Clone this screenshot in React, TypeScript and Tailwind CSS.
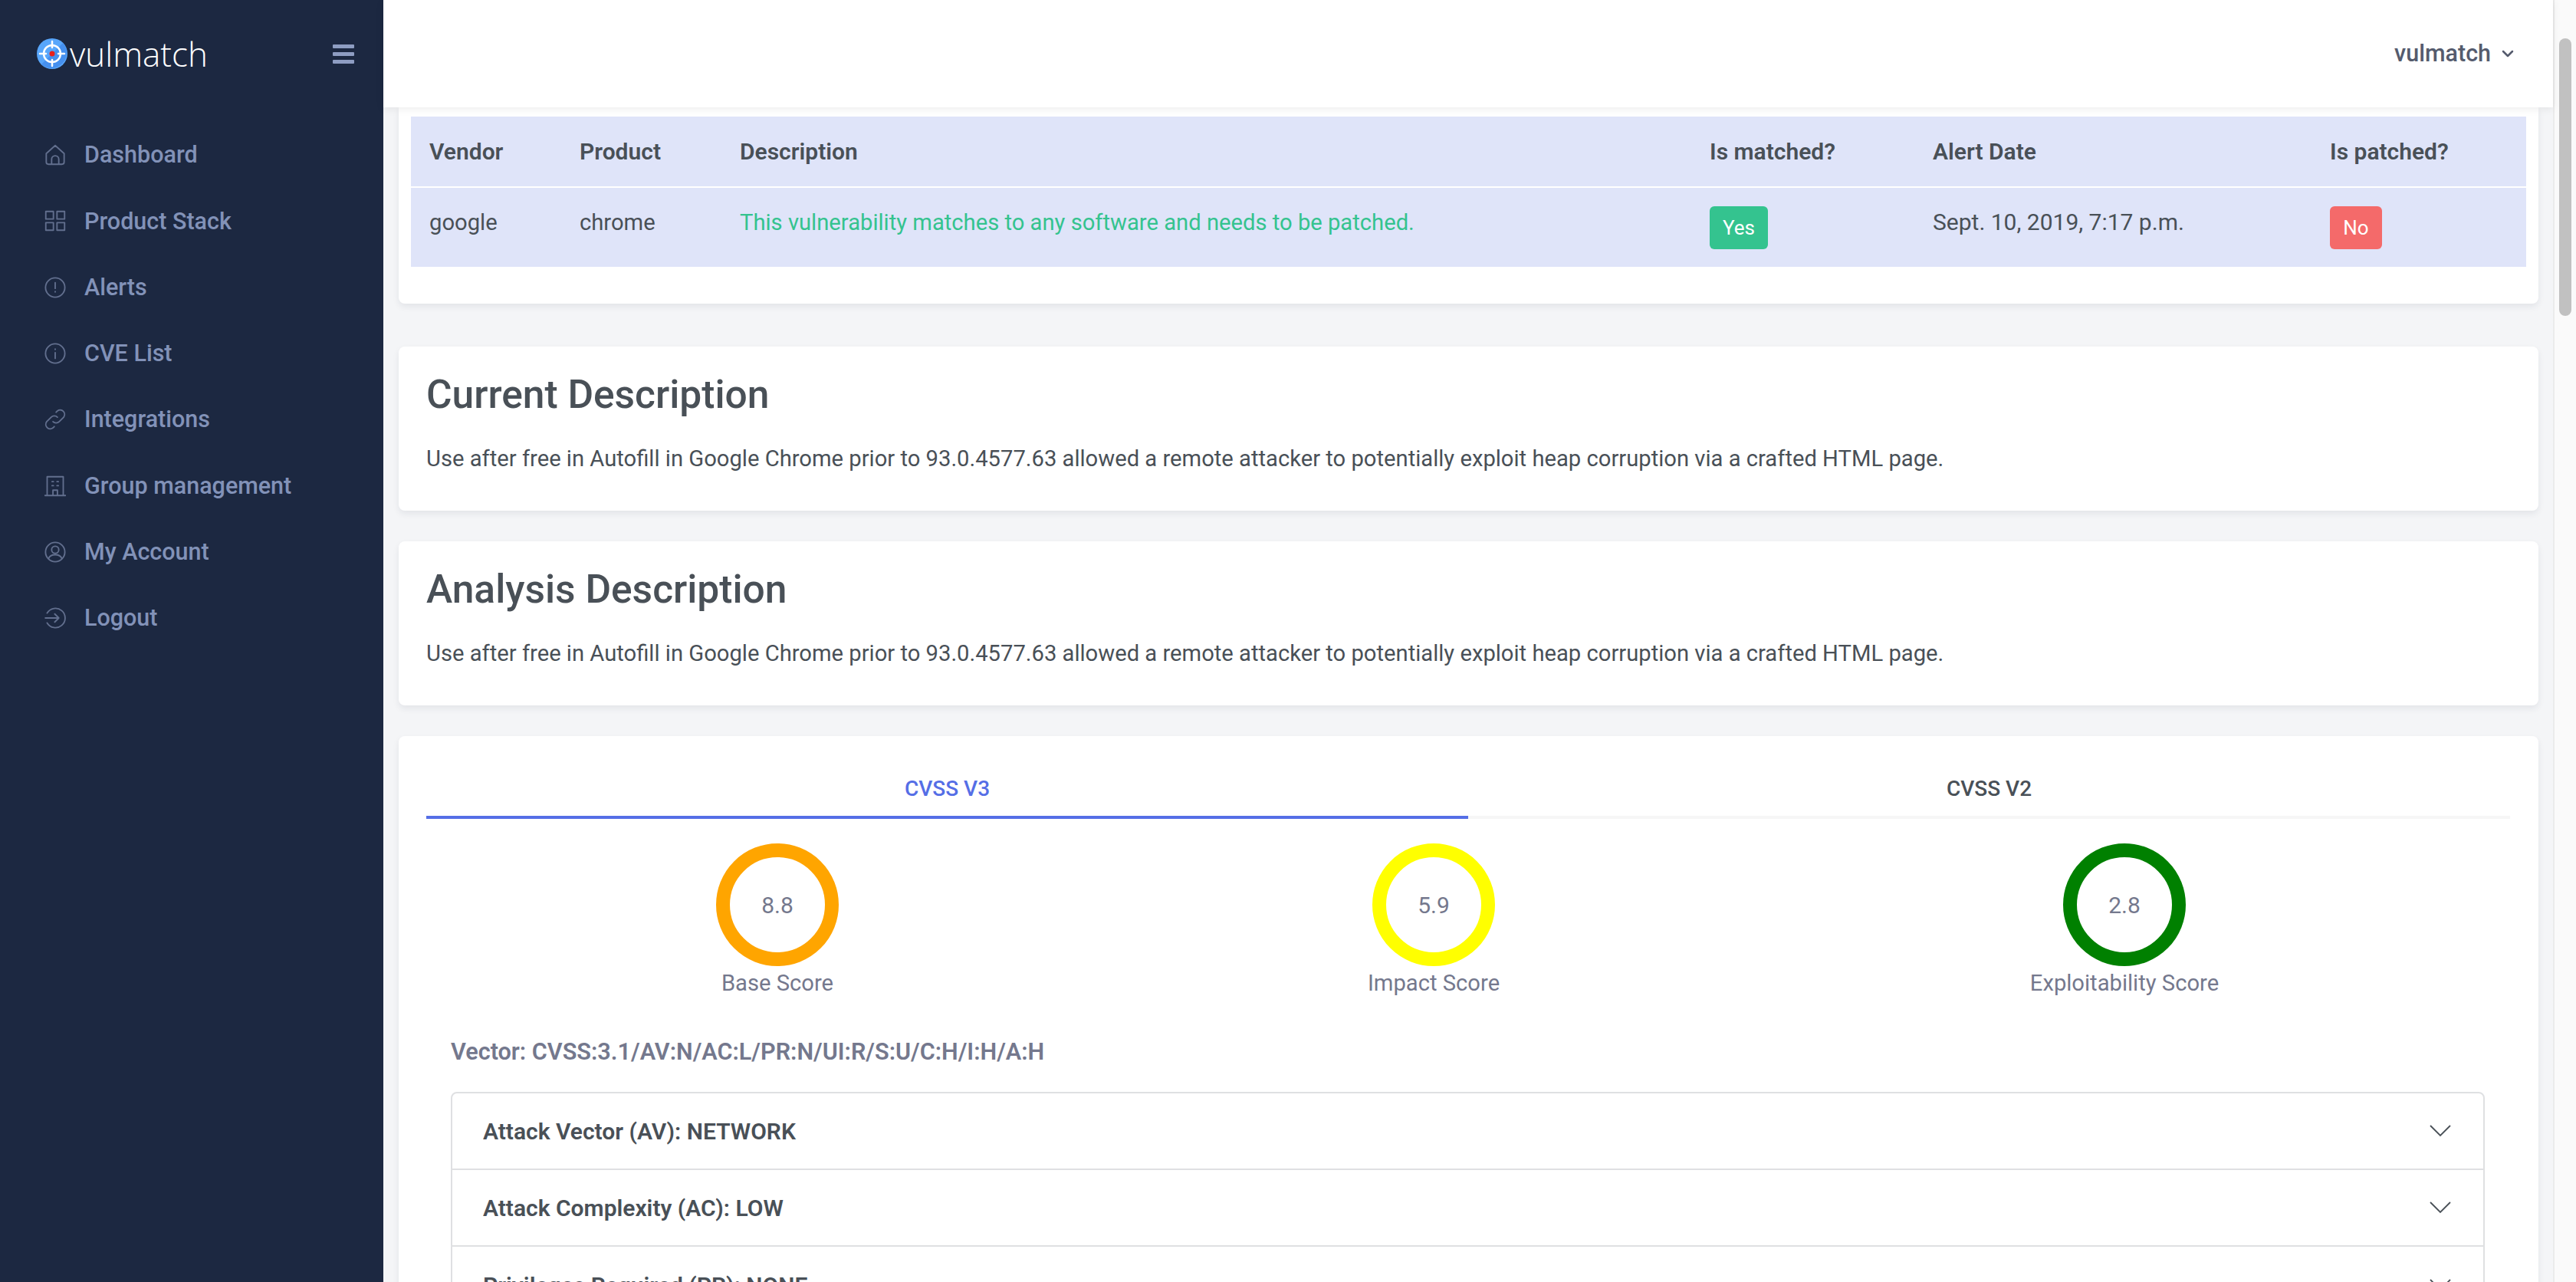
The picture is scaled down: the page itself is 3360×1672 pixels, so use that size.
import { ChevronDown } from 'lucide-react';

const navItems = [
  { label: 'Dashboard', d: 'M2 10.500 12 1.500l10 9V20a2.500 2.500 0 0 1-2.500 2.500h-15A2.500 2.500 0 0 1 2 20zM8 22.500V17a4 4 0 0 1 8 0v5.500' },
  { label: 'Product Stack', d: 'M1.500 1.500h8.500V10H1.500zM14 1.500h8.500V10H14zM1.500 14h8.500v8.500H1.500zM14 14h8.500v8.500H14z' },
  { label: 'Alerts', d: 'M12 1.200a10.800 10.800 0 1 0 0 21.600 10.800 10.800 0 0 0 0-21.600zM12 6.500v6.500M12 16.500v.5' },
  { label: 'CVE List', d: 'M12 1.200a10.800 10.800 0 1 0 0 21.600 10.800 10.800 0 0 0 0-21.600zM12 11v6.500M12 7v.5' },
  { label: 'Integrations', d: 'M9.500 14.500a5 5 0 0 0 7 0l5-5a5 5 0 0 0-7-7l-1.500 1.500M14.500 9.500a5 5 0 0 0-7 0l-5 5a5 5 0 0 0 7 7l1.500-1.500' },
  { label: 'Group management', d: 'M3 22.500V1.500h18v21M.500 22.500h23M9.500 22.500v-6h5v6M8.500 7h1.500M14 7h1.500M8.500 11.500h1.500M14 11.500h1.500' },
  { label: 'My Account', d: 'M12 1.200a10.800 10.800 0 1 0 0 21.600 10.800 10.800 0 0 0 0-21.600zM12 5.500a4 4 0 1 0 0 8 4 4 0 0 0 0-8zM4.500 19.500c1-3 4-4.500 7.500-4.500s6.500 1.500 7.500 4.500' },
  { label: 'Logout', d: 'M3 6.500a10.800 10.800 0 1 1 0 11M1 12h15M11.500 7.500 16 12l-4.500 4.500' },
];

const scores = [
  { value: '8.8', label: 'Base Score', ring: 'border-[#ffa500]', width: 'w-[916px]' },
  { value: '5.9', label: 'Impact Score', ring: 'border-[#ffff00]', width: 'w-[796px]' },
  { value: '2.8', label: 'Exploitability Score', ring: 'border-[#008000]', width: 'flex-1' },
];

const metrics = ['Attack Vector (AV): NETWORK', 'Attack Complexity (AC): LOW', 'Privileges Required (PR): NONE'];

const descriptionText =
  'Use after free in Autofill in Google Chrome prior to 93.0.4577.63 allowed a remote attacker to potentially exploit heap corruption via a crafted HTML page.';

function Logo() {
  return (
    <svg viewBox="0 0 40 40" className="w-10 h-10 shrink-0">
      <circle cx="20" cy="20" r="20" fill="#58a6fb" />
      <path d="M34.100 5.900A20 20 0 0 1 5.900 34.100z" fill="#4690ef" />
      <circle cx="20" cy="20" r="11" fill="none" stroke="#fff" strokeWidth="2.500" />
      <path d="M20 4v8M20 28v8M4 20h8M28 20h8" stroke="#fff" strokeWidth="2.500" strokeLinecap="round" />
      <circle cx="20" cy="20" r="3.500" fill="#e8201c" />
    </svg>
  );
}

function Sidebar() {
  return (
    <aside className="w-[500px] shrink-0 bg-[#1c2841]">
      <div className="h-[140px] pl-12 pr-[38px] flex items-center justify-between">
        <div className="flex items-center">
          <Logo />
          <span className="ml-[3px] text-[44px] leading-none text-white font-['Open_Sans'] font-light">vulmatch</span>
        </div>
        <svg viewBox="0 0 28 25" className="w-7 h-[25px] fill-[#8e9dc2]">
          <rect width="28" height="5" rx="1" />
          <rect y="10" width="28" height="5" rx="1" />
          <rect y="20" width="28" height="5" rx="1" />
        </svg>
      </div>
      <nav className="pt-[19px] pl-[58px] flex flex-col">
        {navItems.map((item) => (
          <div key={item.label} className="h-[86.300px] flex items-center">
            <svg
              viewBox="0 0 24 24"
              fill="none"
              stroke="#626f8e"
              strokeWidth="1.600"
              strokeLinecap="round"
              strokeLinejoin="round"
              className="w-7 h-7 shrink-0"
            >
              <path d={item.d} />
            </svg>
            <span className="ml-6 text-[30.500px] font-medium text-[#8292b8]">{item.label}</span>
          </div>
        ))}
      </nav>
    </aside>
  );
}

function Header() {
  return (
    <header className="relative z-10 h-[140px] shrink-0 bg-white shadow-[0_2px_10px_rgba(0,0,0,0.08)] flex items-center justify-end pr-[47px]">
      <span className="text-[30.500px] font-medium text-[#555b6d]">vulmatch</span>
      <ChevronDown className="ml-[10px] w-6 h-6 text-[#555b6d]" strokeWidth={2.5} />
    </header>
  );
}

function AlertCard() {
  return (
    <section className="shrink-0 bg-white rounded-b-lg shadow-[0_4px_8px_rgba(30,40,60,0.08)] px-4 pt-3 pb-12 mb-[16px]">
      <table className="w-full table-fixed text-[29.200px] text-[#495057] bg-[#dfe4f9]">
        <thead>
          <tr className="h-[92px] border-b-2 border-white text-left text-[30px]">
            <th className="pl-6 w-[196px] font-semibold">Vendor</th>
            <th className="pl-6 w-[209px] font-semibold">Product</th>
            <th className="pl-6 w-[1265px] font-semibold">Description</th>
            <th className="pl-6 w-[291px] font-semibold">Is matched?</th>
            <th className="pl-6 w-[518px] font-semibold">Alert Date</th>
            <th className="pl-6 font-semibold">Is patched?</th>
          </tr>
        </thead>
        <tbody>
          <tr className="h-[104px] align-top leading-[44px]">
            <td className="pl-6 pt-[23px]">google</td>
            <td className="pl-6 pt-[23px]">chrome</td>
            <td className="pl-6 pt-[23px] text-[#34c38f]">This vulnerability matches to any software and needs to be patched.</td>
            <td className="pl-6 pt-6">
              <span className="flex items-center justify-center w-[76px] h-14 rounded-md bg-[#34c38f] text-white text-[26px]">Yes</span>
            </td>
            <td className="pl-6 pt-[23px] text-[30px]">Sept. 10, 2019, 7:17 p.m.</td>
            <td className="pl-6 pt-6">
              <span className="flex items-center justify-center w-[68px] h-14 rounded-md bg-[#f46a6a] text-white text-[26px]">No</span>
            </td>
          </tr>
        </tbody>
      </table>
    </section>
  );
}

function TextCard({ title }: { title: string }) {
  return (
    <section className="shrink-0 bg-white rounded-lg shadow-[0_4px_8px_rgba(30,40,60,0.08)] h-[214px] px-9 pt-[33px]">
      <h2 className="text-[51.500px] leading-[60px] font-medium text-[#495057]">{title}</h2>
      <p className="mt-[31px] text-[29.200px] leading-[44px] text-[#495057]">{descriptionText}</p>
    </section>
  );
}

function CvssCard() {
  return (
    <section className="shrink-0 bg-white rounded-t-lg shadow-[0_4px_8px_rgba(30,40,60,0.08)] pl-9 pr-[37px] pt-[34px]">
      <div className="flex text-[28px] font-medium">
        <div className="w-1/2 h-[74px] border-b-4 border-[#556ee6] text-[#556ee6] flex items-center justify-center">CVSS V3</div>
        <div className="w-1/2 h-[74px] border-b-4 border-[#f6f6f6] text-[#495057] flex items-center justify-center">CVSS V2</div>
      </div>
      <div className="flex mt-8">
        {scores.map((score) => (
          <div key={score.label} className={`${score.width} flex flex-col items-center`}>
            <div className={`w-40 h-40 rounded-full border-[18px] ${score.ring} flex items-center justify-center text-[30px] text-[#74788d]`}>
              {score.value}
            </div>
            <div className="mt-[2px] text-[29.200px] leading-[40px] text-[#74788d]">{score.label}</div>
          </div>
        ))}
      </div>
      <div className="pl-8 pr-[33px]">
        <p className="mt-[48px] text-[30.600px] leading-[44px] font-semibold text-[#74788d]">Vector: CVSS:3.1/AV:N/AC:L/PR:N/UI:R/S:U/C:H/I:H/A:H</p>
        <div className="mt-[30px] border-2 border-[#dfe0e2] rounded-lg">
          {metrics.map((metric) => (
            <div key={metric} className="h-[100px] pl-[40px] pr-[42px] flex items-center justify-between border-b-2 border-[#dfe0e2] last:border-b-0">
              <span className="text-[30px] font-semibold text-[#495057]">{metric}</span>
              <svg viewBox="0 0 28 16" fill="none" stroke="#495057" strokeWidth="1.800" className="w-7 h-4">
                <path d="M1 1l13 13L27 1" />
              </svg>
            </div>
          ))}
        </div>
      </div>
    </section>
  );
}

export default function App() {
  return (
    <div className="h-screen flex overflow-hidden bg-[#f4f5f7] font-['Roboto',sans-serif]">
      <Sidebar />
      <div className="flex-1 min-w-0 flex flex-col">
        <Header />
        <main className="flex-1 min-h-0 overflow-hidden pl-5 pr-[19px] flex flex-col gap-10">
          <AlertCard />
          <TextCard title="Current Description" />
          <TextCard title="Analysis Description" />
          <CvssCard />
        </main>
      </div>
      {/* scrollbar */}
      <div className="w-[30px] shrink-0 bg-[#fafafa] border-l-2 border-[#ebebeb] pt-[50px] pl-[6px]">
        <div className="w-4 h-[362px] rounded-full bg-[#c1c1c1]" />
      </div>
    </div>
  );
}
